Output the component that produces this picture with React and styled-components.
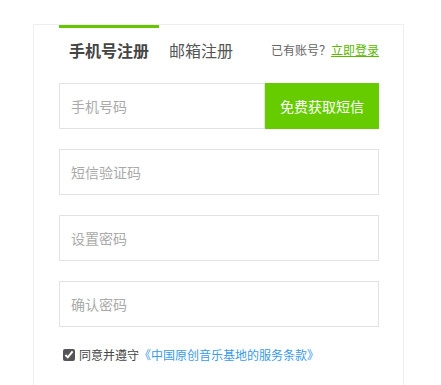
import React from 'react'
import styled, { createGlobalStyle } from 'styled-components'

const GlobalStyle = createGlobalStyle`
  body {
    margin: 0;
    background: #fff;
    font-family: "Microsoft YaHei", "Noto Sans CJK SC", "Noto Sans", sans-serif;
  }
`

const fields = ['短信验证码', '设置密码', '确认密码']

const App = () => {
  return (
    <>
      <GlobalStyle />
      <Card>
        <Header>
          <Tabs>
            <Tab active>手机号注册</Tab>
            <Tab>邮箱注册</Tab>
          </Tabs>
          <LoginHint>
            已有账号？<LoginLink>立即登录</LoginLink>
          </LoginHint>
        </Header>
        <Form>
          <PhoneRow>
            <Input placeholder="手机号码" />
            <SmsButton>免费获取短信</SmsButton>
          </PhoneRow>
          {fields.map((f) => (
            <Field key={f}>
              <Input placeholder={f} />
            </Field>
          ))}
          <Agree>
            <CheckBox type="checkbox" defaultChecked />
            同意并遵守<Terms>《中国原创音乐基地的服务条款》</Terms>
          </Agree>
        </Form>
      </Card>
    </>
  )
}

export default App

const Card = styled.div`
  box-sizing: border-box;
  margin: 24px 0 0 33px;
  width: 371px;
  height: 361px;
  padding: 0 24px 0 25px;
  border: 1px solid #eeeeee;
  border-bottom: none;
`

const Header = styled.div`
  display: flex;
  align-items: flex-start;
  justify-content: space-between;
  height: 58px;
`

const Tabs = styled.div`
  display: flex;
`

const Tab = styled.div`
  box-sizing: border-box;
  height: 47px;
  line-height: 44px;
  padding: 0 10px;
  font-size: 16px;
  border-top: 3px solid ${(p) => (p.active ? '#66c400' : 'transparent')};
  color: ${(p) => (p.active ? '#444' : '#555')};
  font-weight: ${(p) => (p.active ? 'bold' : 'normal')};
`

const LoginHint = styled.div`
  margin-top: 3px;
  line-height: 44px;
  font-size: 12px;
  color: #666;
`

const LoginLink = styled.a`
  color: #5cb800;
  text-decoration: underline;
  cursor: pointer;
`

const Form = styled.div`
  display: flex;
  flex-direction: column;
  gap: 20px;
`

const PhoneRow = styled.div`
  display: flex;
  height: 46px;
`

const Field = styled.div`
  display: flex;
  height: 46px;
`

const Input = styled.input`
  box-sizing: border-box;
  flex: 1;
  min-width: 0;
  height: 100%;
  margin: 0;
  border: 1px solid #e3e3e3;
  padding: 0 11px;
  font-size: 14px;
  font-family: inherit;
  color: #333;
  outline: none;

  &::placeholder {
    color: #aaa;
  }
`

const SmsButton = styled.button`
  width: 114px;
  height: 100%;
  margin: 0;
  border: none;
  background: #66cc00;
  color: #fff;
  font-size: 14px;
  font-weight: normal;
  font-family: inherit;
  padding: 0;
  cursor: pointer;
`

const Agree = styled.label`
  display: flex;
  align-items: center;
  margin-top: -1px;
  padding-left: 4px;
  font-size: 12px;
  color: #444;
`

const CheckBox = styled.input`
  width: 12px;
  height: 12px;
  margin: 0 4px 0 0;
  accent-color: #555;
`

const Terms = styled.span`
  color: #3a9be8;
`
